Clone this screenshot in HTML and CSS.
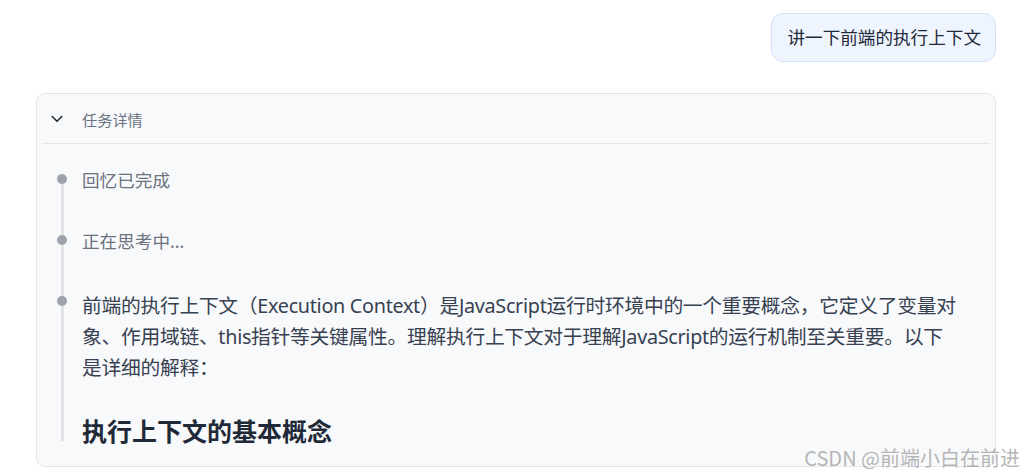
FILE: index.html
```html
<!DOCTYPE html>
<html lang="zh-CN">
<head>
<meta charset="utf-8">
<title>任务详情</title>
<link rel="stylesheet" href="styles.css">
</head>
<body>
<div class="page">
  <div class="user-row">
    <div class="bubble">讲一下前端的执行上下文</div>
  </div>
  <section class="card">
    <header class="card-head">
      <svg class="chev" width="12" height="8" viewBox="0 0 12 8" aria-hidden="true">
        <polyline points="1.2,1.5 6,6.2 10.8,1.5" fill="none" stroke="#1f2937" stroke-width="1.6" stroke-linecap="round" stroke-linejoin="round"/>
      </svg>
      <span class="head-title">任务详情</span>
    </header>
    <div class="body">
      <ol class="steps">
        <li class="step muted">回忆已完成</li>
        <li class="step muted">正在思考中...</li>
        <li class="step answer">
          <p class="para">前端的执行上下文（Execution Context）是JavaScript运行时环境中的一个重要概念，它定义了变量对象、作用域链、this指针等关键属性。理解执行上下文对于理解JavaScript的运行机制至关重要。以下<br>是详细的解释：</p>
          <h3 class="sub">执行上下文的基本概念</h3>
        </li>
      </ol>
    </div>
  </section>
  <div class="watermark">CSDN @前端小白在前进</div>
</div>
</body>
</html>
```

FILE: styles.css
```css
* { box-sizing: border-box; }
html, body {
  margin: 0;
  padding: 0;
  background: #ffffff;
  overflow: hidden;
}
body {
  font-family: "Noto Sans", "Noto Sans CJK SC", sans-serif;
  color: #1f2937;
}
.page {
  position: relative;
  width: 1020px;
  height: 475px;
  padding: 13px 24px 0 36px;
}
.user-row {
  display: flex;
  justify-content: flex-end;
}
.bubble {
  height: 49px;
  line-height: 47px;
  padding: 0 14px 0 15px;
  font-size: 17.6px;
  color: #1f2937;
  background: #eef5ff;
  border: 1px solid #d3e3fb;
  border-radius: 12px;
}
.card {
  margin-top: 31px;
  background: #f8f9fb;
  border: 1px solid #e3e5e9;
  border-radius: 9px;
  padding-bottom: 22px;
}
.card-head {
  height: 49px;
  display: flex;
  align-items: center;
  padding-left: 14px;
}
.chev {
  display: block;
  flex: none;
}
.head-title {
  margin-left: 19px;
  font-size: 15.2px;
  color: #6b7280;
}
.body {
  border-top: 1px solid #e4e6ea;
  margin: 0 5px;
}
.steps {
  position: relative;
  list-style: none;
  margin: 0;
  padding: 24px 8px 0 40px;
}
.steps::before {
  content: "";
  position: absolute;
  left: 19px;
  top: 36px;
  bottom: 3px;
  width: 3px;
  background: #e2e4e8;
}
.step {
  position: relative;
}
.step::before {
  content: "";
  position: absolute;
  left: -25px;
  top: 6px;
  width: 10px;
  height: 10px;
  border-radius: 50%;
  background: #9ea2ab;
}
.step + .step {
  margin-top: 37px;
}
.muted {
  font-size: 17.6px;
  line-height: 24px;
  color: #6b7280;
}
.answer {
  color: #374151;
}
.para {
  margin: 0;
  font-size: 19.8px;
  line-height: 31px;
  letter-spacing: -0.3px;
}
.sub {
  margin: 35px 0 0;
  font-size: 25px;
  line-height: 26px;
  font-weight: 700;
  color: #1f2937;
}
.watermark {
  position: absolute;
  right: 0;
  bottom: 4px;
  font-family: "Noto Sans CJK SC", sans-serif;
  font-size: 20px;
  line-height: 26px;
  white-space: nowrap;
  color: rgba(150, 150, 150, 0.7);
}
```
